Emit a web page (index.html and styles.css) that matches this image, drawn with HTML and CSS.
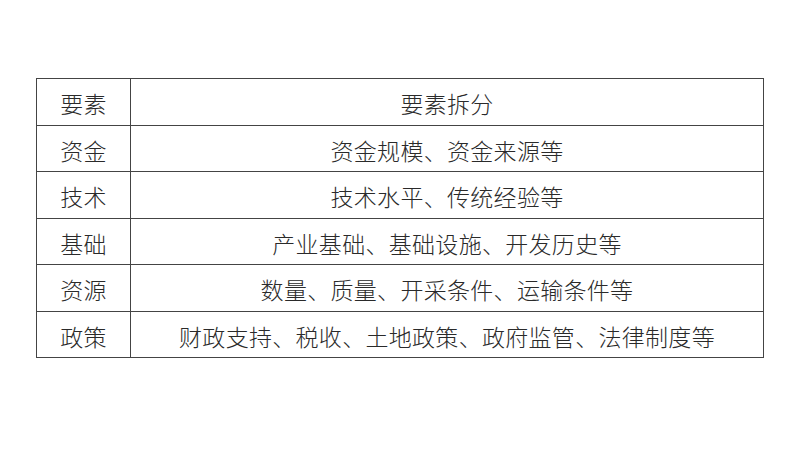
FILE: index.html
```html
<!DOCTYPE html>
<html lang="zh">
<head>
<meta charset="utf-8">
<link rel="stylesheet" href="styles.css">
</head>
<body>
<div class="page">
<table class="grid">
<tr><td class="key">要素</td><td class="val">要素拆分</td></tr>
<tr><td class="key">资金</td><td class="val">资金规模、资金来源等</td></tr>
<tr><td class="key">技术</td><td class="val">技术水平、传统经验等</td></tr>
<tr><td class="key">基础</td><td class="val">产业基础、基础设施、开发历史等</td></tr>
<tr><td class="key">资源</td><td class="val">数量、质量、开采条件、运输条件等</td></tr>
<tr><td class="key">政策</td><td class="val">财政支持、税收、土地政策、政府监管、法律制度等</td></tr>
</table>
</div>
</body>
</html>
```
FILE: styles.css
```css
html, body {
  margin: 0;
  padding: 0;
  background: #ffffff;
}
.page {
  padding: 78px 0 0 36px;
}
.grid {
  border-collapse: collapse;
  width: 728px;
  font-family: "Noto Sans CJK SC", "Noto Sans", sans-serif;
  font-size: 23px;
  font-weight: 300;
  letter-spacing: 0.3px;
  color: #2a2a2a;
}
.grid td {
  border: 1.5px solid #444;
  height: 46.5px;
  padding: 4px 0 0 0;
  box-sizing: border-box;
  text-align: center;
  vertical-align: middle;
  line-height: 1;
}
.grid .key {
  width: 94px;
}
```
